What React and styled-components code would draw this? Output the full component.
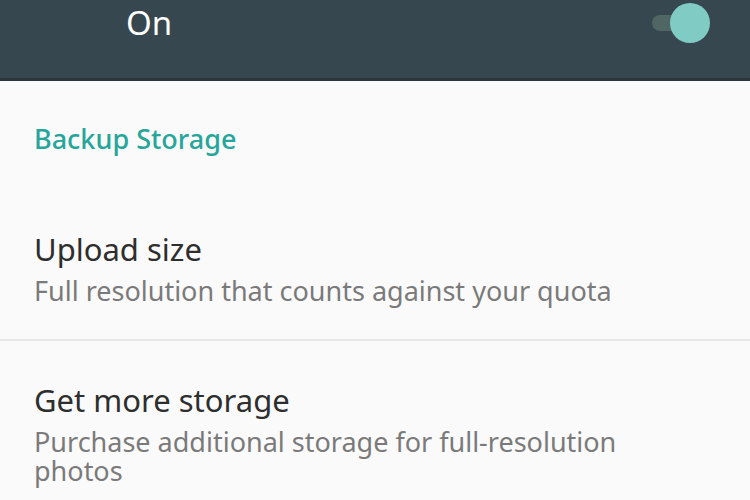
import React from "react";
import styled, { createGlobalStyle } from "styled-components";

const GlobalStyle = createGlobalStyle`
  html, body {
    margin: 0;
    padding: 0;
    background: #fafafa;
    font-family: "Noto Sans", "Open Sans", sans-serif;
  }
`;

const Screen = styled.div`
  width: 750px;
  height: 500px;
  overflow: hidden;
  background: #fafafa;
`;

const TopBar = styled.div`
  height: 78px;
  background: #37474f;
  border-bottom: 3px solid #2b373d;
  display: flex;
  align-items: flex-start;
  justify-content: space-between;
  padding: 0 38px 0 126px;
`;

const BarLabel = styled.span`
  color: #fff;
  font-size: 33px;
  line-height: 1;
  margin-top: 6px;
`;

const Toggle = styled.div`
  position: relative;
  width: 64px;
  height: 44px;
  margin-top: 1px;
`;

const Track = styled.div`
  position: absolute;
  left: 4px;
  right: 4px;
  top: 14px;
  height: 16px;
  border-radius: 8px;
  background: #4f6664;
`;

const Thumb = styled.div`
  position: absolute;
  right: 2px;
  top: 2px;
  width: 40px;
  height: 40px;
  border-radius: 50%;
  background: #80cbc4;
`;

const Section = styled.div`
  padding: 0 34px;
  border-bottom: ${p => (p.divided ? "2px solid #e6e6e6" : "none")};
`;

const Header = styled.div`
  color: #26a69a;
  font-size: 27px;
  font-weight: 500;
  line-height: 36px;
  padding: 40px 0 0;
  height: 84px;
  box-sizing: border-box;
`;

const Item = styled.div`
  padding: ${p => (p.first ? "65px 0 34px" : "40px 0 0")};
`;

const Title = styled.div`
  color: #2e2e2e;
  font-size: 31px;
  line-height: 38px;
`;

const Subtitle = styled.div`
  color: #7a7a7a;
  font-size: 27px;
  line-height: 29px;
  margin-top: 8px;
  max-width: 640px;
`;

export default function App() {
  return (
    <Screen>
      <GlobalStyle />
      <TopBar>
        <BarLabel>On</BarLabel>
        <Toggle>
          <Track />
          <Thumb />
        </Toggle>
      </TopBar>
      <Section divided>
        <Header>Backup Storage</Header>
        <Item first>
          <Title>Upload size</Title>
          <Subtitle>Full resolution that counts against your quota</Subtitle>
        </Item>
      </Section>
      <Section>
        <Item>
          <Title>Get more storage</Title>
          <Subtitle>Purchase additional storage for full-resolution photos</Subtitle>
        </Item>
      </Section>
    </Screen>
  );
}
